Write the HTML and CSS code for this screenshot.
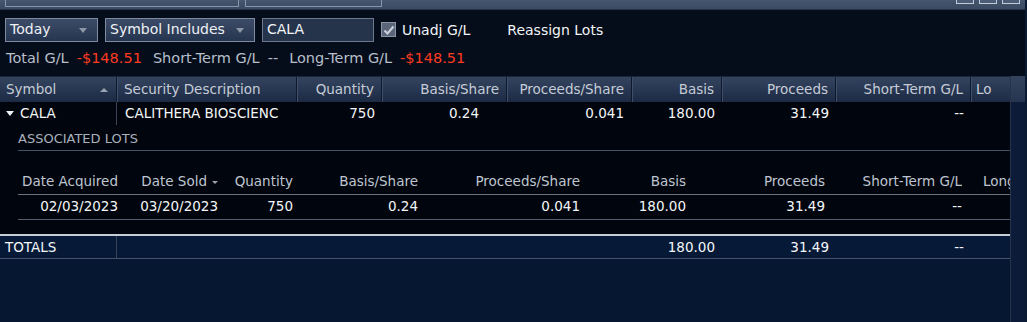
FILE: index.html
```html
<!DOCTYPE html>
<html lang="en">
<head>
    <meta charset="UTF-8">
    <title>Realized Gain/Loss</title>
    <link rel="stylesheet" href="styles.css">
</head>
<body>
    <div class="window">
        <div class="titlebar">
            <div class="title-box box-account"></div>
            <div class="title-box box-range"></div>
            <div class="win-buttons">
                <span class="win-btn"></span>
                <span class="win-btn"></span>
                <span class="win-btn"></span>
            </div>
        </div>

        <div class="toolbar">
            <div class="select sel-period">Today<span class="caret"></span></div>
            <div class="select sel-filter">Symbol Includes<span class="caret"></span></div>
            <div class="search">CALA</div>
            <label class="check">
                <span class="check-box">
                    <svg width="12" height="12" viewBox="0 0 12 12"><path d="M1.5 6.5 L4.5 9.5 L10.5 2.5" fill="none" stroke="#c9d0da" stroke-width="2.2"/></svg>
                </span>
                Unadj G/L
            </label>
            <span class="link">Reassign Lots</span>
        </div>

        <div class="summary">
            <span>Total G/L</span><span class="neg">-$148.51</span>
            <span class="gap">Short-Term G/L</span><span>--</span>
            <span class="gap">Long-Term G/L</span><span class="neg">-$148.51</span>
        </div>

        <div class="grid-wrap">
            <div class="grid">
                <div class="grid-head cols">
                    <div class="hc left">Symbol<span class="sort-up"></span></div>
                    <div class="hc left">Security Description</div>
                    <div class="hc">Quantity</div>
                    <div class="hc">Basis/Share</div>
                    <div class="hc">Proceeds/Share</div>
                    <div class="hc">Basis</div>
                    <div class="hc">Proceeds</div>
                    <div class="hc">Short-Term G/L</div>
                    <div class="hc left">Lo</div>
                </div>

                <div class="row cols">
                    <div class="cell left sym"><span class="expand"></span>CALA</div>
                    <div class="cell left desc">CALITHERA BIOSCIENC</div>
                    <div class="cell">750</div>
                    <div class="cell bps">0.24</div>
                    <div class="cell">0.041</div>
                    <div class="cell">180.00</div>
                    <div class="cell">31.49</div>
                    <div class="cell">--</div>
                    <div class="cell"></div>
                </div>

                <div class="lots">
                    <div class="lots-title">ASSOCIATED LOTS</div>
                    <div class="lots-head lot-cols">
                        <div>Date Acquired</div>
                        <div>Date Sold<span class="sort-down"></span></div>
                        <div>Quantity</div>
                        <div>Basis/Share</div>
                        <div>Proceeds/Share</div>
                        <div>Basis</div>
                        <div>Proceeds</div>
                        <div>Short-Term G/L</div>
                        <div class="left">Long</div>
                    </div>
                    <div class="lots-row lot-cols">
                        <div>02/03/2023</div>
                        <div>03/20/2023</div>
                        <div>750</div>
                        <div>0.24</div>
                        <div>0.041</div>
                        <div>180.00</div>
                        <div>31.49</div>
                        <div>--</div>
                        <div></div>
                    </div>
                </div>

                <div class="totals cols">
                    <div class="cell left sym">TOTALS</div>
                    <div class="cell"></div>
                    <div class="cell"></div>
                    <div class="cell"></div>
                    <div class="cell"></div>
                    <div class="cell">180.00</div>
                    <div class="cell">31.49</div>
                    <div class="cell">--</div>
                    <div class="cell"></div>
                </div>
            </div>
            <div class="scrollbar">
                <div class="scroll-head"></div>
            </div>
        </div>
    </div>
</body>
</html>
```

FILE: styles.css
```css
body {
    margin: 0;
    padding: 0;
    background-color: #0b1a33;
    font-family: "DejaVu Sans", Verdana, sans-serif;
    font-size: 13.5px;
    overflow: hidden;
}

.window {
    width: 1025px;
    height: 322px;
    background-color: #050d1a;
    display: flex;
    flex-direction: column;
}

/* title strip */
.titlebar {
    height: 10px;
    background: linear-gradient(#46566f, #3a4a63);
    display: flex;
    align-items: flex-start;
    border-bottom: 1px solid #26334a;
    box-sizing: border-box;
}

.title-box {
    height: 7px;
    border: 1px solid #8995a8;
    border-top: none;
    box-sizing: border-box;
}

.box-account {
    width: 234px;
    margin-left: 5px;
}

.box-range {
    width: 137px;
    margin-left: 6px;
}

.win-buttons {
    margin-left: auto;
    margin-right: 5px;
    display: flex;
    gap: 5px;
}

.win-btn {
    width: 18px;
    height: 4px;
    border: 1px solid #c3cad5;
    border-top: none;
    box-sizing: border-box;
    background-color: #4d5d78;
}

/* filters */
.toolbar {
    display: flex;
    align-items: center;
    margin-top: 7px;
    padding-left: 5px;
    height: 25px;
    font-size: 14px;
    color: #f2f4f7;
}

.select {
    position: relative;
    height: 24px;
    box-sizing: border-box;
    border: 1px solid #7d8aa0;
    background: linear-gradient(#3c4c68, #26354f);
    padding-left: 4px;
    line-height: 21px;
    color: #eef1f5;
}

.sel-period {
    width: 93px;
}

.sel-filter {
    width: 150px;
    margin-left: 7px;
}

.caret {
    position: absolute;
    right: 10px;
    top: 9px;
    border-left: 4px solid transparent;
    border-right: 4px solid transparent;
    border-top: 5px solid #8c96a6;
}

.search {
    width: 112px;
    height: 24px;
    margin-left: 7px;
    box-sizing: border-box;
    border: 1px solid #6c7890;
    background-color: #26344b;
    padding-left: 4px;
    line-height: 21px;
}

.check {
    display: flex;
    align-items: center;
    margin-left: 7px;
}

.check-box {
    width: 15px;
    height: 15px;
    box-sizing: border-box;
    border: 1px solid #8a95a6;
    background-color: #5b6579;
    display: flex;
    align-items: center;
    justify-content: center;
    margin-right: 6px;
}

.link {
    margin-left: 37px;
}

/* totals line */
.summary {
    display: flex;
    gap: 8px;
    padding-left: 6px;
    margin-top: 7px;
    height: 19px;
    line-height: 19px;
    font-size: 14.5px;
    color: #b7bfcb;
}

.summary .gap {
    margin-left: 3px;
}

.neg {
    color: #ff3b22;
}

/* grid */
.grid-wrap {
    display: flex;
    margin-top: 8px;
    flex: 1;
}

.grid {
    width: 1010px;
    display: flex;
    flex-direction: column;
    background-color: #061831;
}

.cols {
    display: grid;
    grid-template-columns: 117px 180px 85px 125px 125px 90px 114px 135px 39px;
}

.grid-head {
    height: 26px;
    background: linear-gradient(#34445f, #1c2a44);
    border-top: 1px solid #1b2438;
    box-sizing: border-box;
    color: #c5ccd7;
}

.hc {
    position: relative;
    line-height: 25px;
    text-align: right;
    padding-right: 7px;
    border-right: 1px solid #0f192b;
    box-shadow: inset 1px 0 0 #3f4f6a;
    white-space: nowrap;
    overflow: hidden;
}

.hc.left {
    text-align: left;
    padding-left: 7px;
}

.hc:first-child {
    padding-left: 6px;
    box-shadow: none;
}

.hc:last-child {
    border-right: none;
    padding-left: 5px;
}

.sort-up {
    position: absolute;
    right: 8px;
    top: 11px;
    border-left: 4px solid transparent;
    border-right: 4px solid transparent;
    border-bottom: 4px solid #9aa3b1;
}

.row {
    height: 23px;
    background-color: #01050e;
    color: #f4f6f8;
}

.cell {
    line-height: 23px;
    text-align: right;
    padding-right: 7px;
    white-space: nowrap;
    overflow: hidden;
}

.cell.left {
    text-align: left;
    padding-left: 8px;
}

.cell.sym {
    padding-left: 5px;
    border-right: 1px solid #3a4457;
    display: flex;
    align-items: center;
}

.cell.desc {
    padding-right: 8px;
    text-overflow: clip;
}

.cell.bps {
    padding-right: 28px;
}

.row .cell:nth-child(5) {
    padding-right: 8px;
}

.expand {
    width: 0;
    height: 0;
    border-left: 4px solid transparent;
    border-right: 4px solid transparent;
    border-top: 5px solid #f0f2f5;
    margin-right: 6px;
    margin-left: 1px;
}

/* associated lots */
.lots {
    background-color: #01050e;
    padding-left: 18px;
    padding-bottom: 14px;
}

.lots-title {
    font-size: 13px;
    color: #a9b1bd;
    height: 25px;
    line-height: 28px;
    border-bottom: 1px solid #46526a;
}

.lot-cols {
    display: grid;
    grid-template-columns: 100px 100px 75px 125px 162px 106px 139px 137px 48px;
}

.lot-cols > div {
    text-align: right;
    white-space: nowrap;
    overflow: hidden;
    position: relative;
}

.lot-cols > div.left {
    text-align: left;
    padding-left: 21px;
}

.lots-head {
    margin-top: 19px;
    height: 24px;
    line-height: 22px;
    color: #bfc6d1;
    border-bottom: 1px solid #6b7383;
}

.sort-down {
    display: inline-block;
    margin-left: 5px;
    vertical-align: middle;
    border-left: 3px solid transparent;
    border-right: 3px solid transparent;
    border-top: 3px solid #9aa3b1;
}

.lots-row {
    height: 24px;
    line-height: 23px;
    color: #f4f6f8;
    border-bottom: 1px solid #555e6e;
}

.totals {
    height: 25px;
    box-sizing: border-box;
    border-top: 2px solid #c6cdd8;
    border-bottom: 1px solid #47526a;
    color: #f4f6f8;
    background-color: #061a38;
}

.totals .cell {
    line-height: 22px;
}

/* right scroll column */
.scrollbar {
    width: 15px;
    background-color: #0b1b38;
    border-left: 1px solid #27334b;
    box-sizing: border-box;
}

.scroll-head {
    height: 26px;
    background: linear-gradient(#34445f, #26354f);
}
```
